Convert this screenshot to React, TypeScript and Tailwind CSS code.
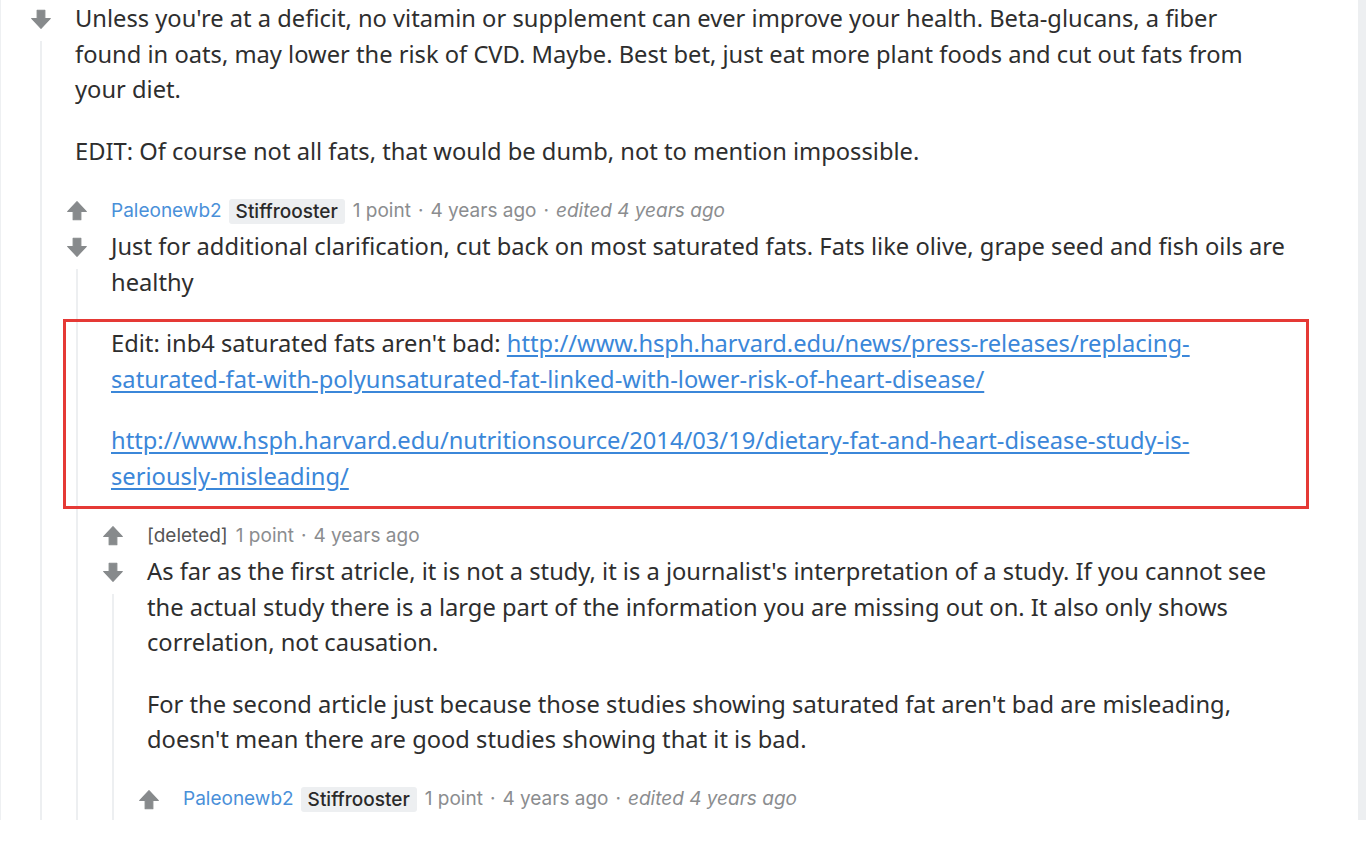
import React from 'react'

const body = { fontFamily: '"Noto Sans", "Open Sans", sans-serif' }
const meta = { fontFamily: 'Inter, "Noto Sans", sans-serif' }

const Arrow = ({ down = false }: { down?: boolean }) => (
  <svg width="22" height="22" viewBox="0 0 20 20" className={down ? 'rotate-180' : ''}>
    <path d="M10 1.5 L18.5 10.5 H13.5 V18 H6.5 V10.5 H1.5 Z" fill="#878a8c" strokeLinejoin="round" stroke="#878a8c" strokeWidth="1" />
  </svg>
)

const Meta = ({ author, flair, edited }: { author: string; flair?: string; edited?: boolean }) => (
  <div className="flex h-[36px] items-center whitespace-nowrap text-[19px] text-[#8b8d8f]" style={meta}>
    {flair ? (
      <span className="text-[#4a90d9]">{author}</span>
    ) : (
      <span className="text-[#555]">{author}</span>
    )}
    {flair && (
      <span className="ml-[7px] rounded-[3px] bg-[#edeff1] px-[7px] font-medium leading-[25px] text-[#2a2a2a]">{flair}</span>
    )}
    <span className="ml-[8px]">1 point</span>
    <span className="mx-[7px]">·</span>
    <span>4 years ago</span>
    {edited && (
      <>
        <span className="mx-[7px]">·</span>
        <span className="italic">edited 4 years ago</span>
      </>
    )}
  </div>
)

function clsxLite(...c: string[]) {
  return c.filter(Boolean).join(' ')
}

const Para = ({ children, last = false }: { children: React.ReactNode; last?: boolean }) => (
  <p className={clsxLite('text-[23.7px] leading-[35.5px] text-[#2e2e2e]', last ? '' : 'mb-[26px]')} style={body}>
    {children}
  </p>
)

const Link = ({ href }: { href: string }) => (
  <a href={href} className="text-[#3b87d9] underline underline-offset-[3px]">
    {href}
  </a>
)

interface CommentProps {
  header?: React.ReactNode
  children?: React.ReactNode
  replies?: React.ReactNode
  noHeader?: boolean
}

const Comment = ({ header, children, replies, noHeader }: CommentProps) => (
  <div className="flex">
    <div className="flex w-[36px] shrink-0 flex-col items-center">
      {!noHeader && (
        <div className="flex h-[36px] items-center">
          <Arrow />
        </div>
      )}
      <div className="flex h-[35.5px] items-center">
        <Arrow down />
      </div>
      <div className="mt-[4px] w-[2px] flex-1 bg-[#edeff1]" />
    </div>
    <div className="min-w-0 flex-1">
      {header && <div className="pl-[16px]">{header}</div>}
      {children && <div className="pb-[24px] pl-[16px]">{children}</div>}
      {replies}
    </div>
  </div>
)

const Leaf = ({ header }: { header: React.ReactNode }) => (
  <div className="flex pb-[120px]">
    <div className="flex w-[36px] shrink-0 flex-col items-center">
      <div className="flex h-[36px] items-center">
        <Arrow />
      </div>
    </div>
    <div className="pl-[16px]">{header}</div>
  </div>
)

export default function App() {
  return (
    <div className="bg-white">
      <div className="relative flex h-[820px] overflow-hidden">
        <div className="w-px shrink-0 bg-[#eef0f2]" />
        <div className="min-w-0 flex-1 pl-[22px] pr-[71px] pt-px">
          <Comment
            noHeader
            replies={
              <Comment
                header={<Meta author="Paleonewb2" flair="Stiffrooster" edited />}
                replies={
                  <Comment
                    header={<Meta author="[deleted]" />}
                    replies={<Leaf header={<Meta author="Paleonewb2" flair="Stiffrooster" edited />} />}
                  >
                    <Para>
                      As far as the first atricle, it is not a study, it is a journalist's interpretation of a study. If
                      you cannot see the actual study there is a large part of the information you are missing out on.
                      It also only shows correlation, not causation.
                    </Para>
                    <Para last>
                      For the second article just because those studies showing saturated fat aren't bad are
                      misleading, doesn't mean there are good studies showing that it is bad.
                    </Para>
                  </Comment>
                }
              >
                <Para>
                  Just for additional clarification, cut back on most saturated fats. Fats like olive, grape seed and
                  fish oils are healthy
                </Para>
                <div className="relative">
                  <Para>
                    Edit: inb4 saturated fats aren't bad:{' '}
                    <Link href="http://www.hsph.harvard.edu/news/press-releases/replacing-saturated-fat-with-polyunsaturated-fat-linked-with-lower-risk-of-heart-disease/" />
                  </Para>
                  <Para last>
                    <Link href="http://www.hsph.harvard.edu/nutritionsource/2014/03/19/dietary-fat-and-heart-disease-study-is-seriously-misleading/" />
                  </Para>
                  <div className="pointer-events-none absolute -bottom-[15px] -left-[48px] -right-[22px] -top-[7px] border-[3px] border-[#e53935]" />
                </div>
              </Comment>
            }
          >
            <Para>
              Unless you're at a deficit, no vitamin or supplement can ever improve your health. Beta-glucans, a fiber
              found in oats, may lower the risk of CVD. Maybe. Best bet, just eat more plant foods and cut out fats from
              your diet.
            </Para>
            <Para last>EDIT: Of course not all fats, that would be dumb, not to mention impossible.</Para>
          </Comment>
        </div>
        <div className="w-[8px] shrink-0 bg-[#edeff1]" />
      </div>
    </div>
  )
}
